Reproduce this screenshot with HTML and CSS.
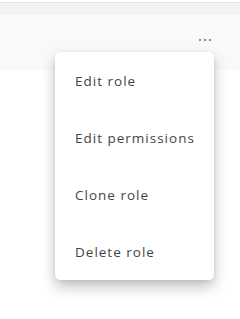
FILE: index.html
```html
<!DOCTYPE html>
<html lang="en">
<head>
    <meta charset="UTF-8">
    <meta name="viewport" content="width=device-width, initial-scale=1.0">
    <title>Roles</title>
    <link rel="stylesheet" href="styles.css">
</head>
<body>
    <div class="top-line"></div>
    <div class="tab-strip"></div>
    <div class="role-row">
        <button class="more-button" aria-label="More actions">
            <span class="dot"></span><span class="dot"></span><span class="dot"></span>
        </button>

        <!-- Context menu for the role -->
        <ul class="menu">
            <li>Edit role</li>
            <li>Edit permissions</li>
            <li>Clone role</li>
            <li>Delete role</li>
        </ul>
    </div>
</body>
</html>
```

FILE: styles.css
```css
body {
    font-family: "Open Sans", Lato, sans-serif;
    margin: 0;
    background-color: #fff;
    height: 319px;
    overflow: hidden;
}
.top-line {
    height: 2px;
    background-color: #fff;
    border-bottom: 1px solid #e4e4e4;
}
.tab-strip {
    height: 12px;
    background-color: #f3f3f3;
}
.role-row {
    position: relative;
    height: 55px;
    background-color: #faf9f8;
    display: flex;
    justify-content: flex-end;
    align-items: flex-start;
    padding-right: 29px;
}
.more-button {
    display: flex;
    gap: 3px;
    margin-top: 24px;
    padding: 0;
    border: none;
    background: none;
    cursor: pointer;
}
.dot {
    width: 2px;
    height: 2px;
    background-color: #8a8a8a;
}
.menu {
    position: absolute;
    top: 37px;
    left: 55px;
    width: 159px;
    margin: 0;
    padding: 0;
    list-style-type: none;
    background-color: #fff;
    border-radius: 5px;
    box-shadow: 0 7px 14px rgba(0, 0, 0, 0.24), 0 1px 4px rgba(0, 0, 0, 0.08);
}
.menu li {
    height: 57px;
    display: flex;
    align-items: center;
    padding-left: 20px;
    font-size: 13.5px;
    letter-spacing: 1px;
    color: #444;
    cursor: pointer;
}
```
